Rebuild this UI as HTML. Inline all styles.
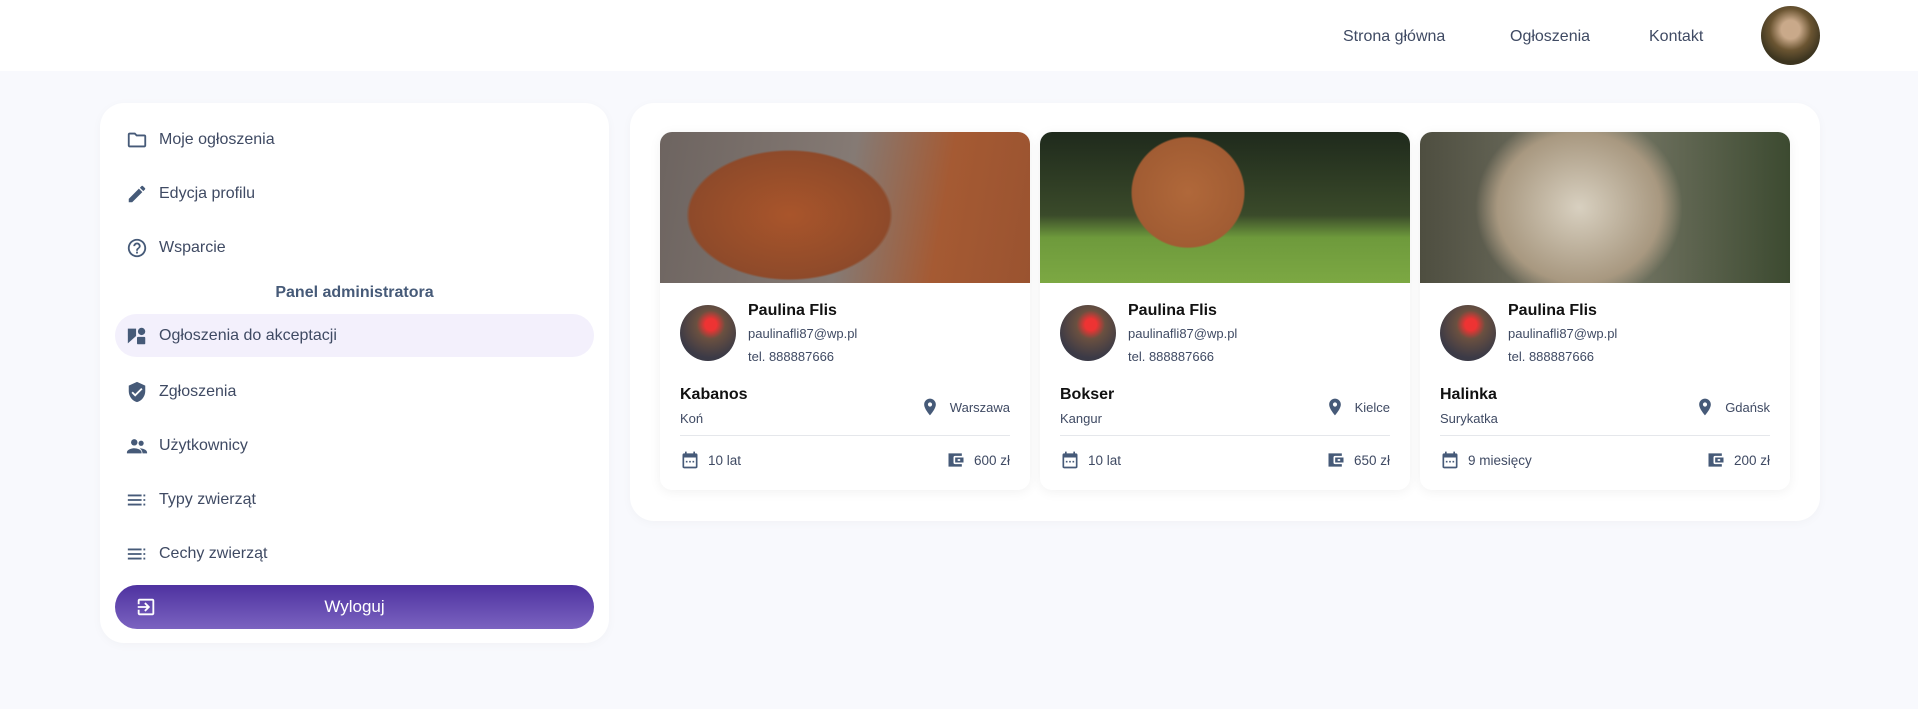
<!DOCTYPE html>
<html><head><meta charset="utf-8"><style>
*{box-sizing:border-box;margin:0;padding:0}
body{width:1918px;height:709px;background:#f8f9fd;font-family:"Liberation Sans",sans-serif;color:#3f4a63;position:relative;overflow:hidden}
.hdr{position:absolute;left:0;top:0;width:1918px;height:71px;background:#fff}
.nav{position:absolute;top:28px;font-size:16px;color:#3f4a63}
.av{position:absolute;left:1761px;top:6px;width:59px;height:59px;border-radius:50%;background:radial-gradient(circle at 50% 40%,#c9a98a 0 20%,#6b5532 45%,#3d3520 70%);overflow:hidden}
.side{position:absolute;left:100px;top:103px;width:509px;height:540px;background:#fff;border-radius:24px;box-shadow:0 2px 10px rgba(0,0,0,.03)}
.it{position:absolute;left:26px;font-size:16px;color:#3f4a63;display:flex;align-items:center;gap:11px;height:24px}
.it svg{width:22px;height:22px;fill:#465a78}
.hl{position:absolute;left:15px;top:211px;width:479px;height:43px;border-radius:22px;background:#f3f0fc}
.ttl{position:absolute;left:0;width:100%;text-align:center;top:181px;font-weight:bold;font-size:16px;color:#465a78}
.btn{position:absolute;left:15px;top:482px;width:479px;height:44px;border-radius:22px;background:linear-gradient(#4e32a0,#7b63c0);color:#fff;font-size:17px;text-align:center;line-height:44px}
.main{position:absolute;left:630px;top:103px;width:1190px;height:418px;background:#fff;border-radius:24px;box-shadow:0 2px 10px rgba(0,0,0,.03)}
.card{position:absolute;top:29px;width:370px;height:358px;background:#fff;border-radius:12px;box-shadow:0 2px 12px rgba(0,0,0,.06);overflow:hidden}
.img{height:151px}
.ua{position:absolute;left:20px;top:173px;width:56px;height:56px;border-radius:50%;background:radial-gradient(circle at 55% 35%,#e33 0 12%,#6a5040 30%,#3b3a46 70%)}
.nm{position:absolute;left:88px;top:170px;font-weight:bold;font-size:16px;color:#111}
.em{position:absolute;left:88px;top:194px;font-size:13px;color:#3f4a63}
.te{position:absolute;left:88px;top:217px;font-size:13px;color:#3f4a63}
.pn{position:absolute;left:20px;top:254px;font-weight:bold;font-size:16px;color:#111}
.sp{position:absolute;left:20px;top:279px;font-size:13px;color:#3f4a63}
.loc{position:absolute;right:20px;top:265px;font-size:13px;display:flex;gap:10px;align-items:center}
.dv{position:absolute;left:20px;right:20px;top:303px;border-top:1px solid #e5e7eb}
.bl{position:absolute;left:20px;top:318px;font-size:13.5px;display:flex;gap:8px;align-items:center}
.br{position:absolute;right:20px;top:318px;font-size:13.5px;display:flex;gap:8px;align-items:center}
svg.s{width:20px;height:20px;fill:#465a78}
</style></head><body>
<div class="hdr">
<div class="nav" style="left:1343px">Strona główna</div>
<div class="nav" style="left:1510px">Ogłoszenia</div>
<div class="nav" style="left:1649px">Kontakt</div>
<div class="av"></div>
</div>
<div class="side">
<div class="it" style="top:25px"><svg viewBox="0 0 24 24"><path d="M20 6h-8l-2-2H4c-1.1 0-2 .9-2 2v12c0 1.1.9 2 2 2h16c1.1 0 2-.9 2-2V8c0-1.1-.9-2-2-2zm0 12H4V6h5.2l2 2H20v10z"/></svg>Moje ogłoszenia</div>
<div class="it" style="top:79px"><svg viewBox="0 0 24 24"><path d="M3 17.25V21h3.75L17.810 9.94l-3.75-3.75L3 17.25zM20.71 7.04a1 1 0 000-1.41l-2.34-2.34a1 1 0 00-1.41 0l-1.83 1.830 3.75 3.75 1.83-1.83z"/></svg>Edycja profilu</div>
<div class="it" style="top:133px"><svg viewBox="0 0 24 24"><path d="M11 18h2v-2h-2v2zm1-16C6.48 2 2 6.48 2 12s4.48 10 10 10 10-4.48 10-10S17.52 2 12 2zm0 18c-4.41 0-8-3.59-8-8s3.59-8 8-8 8 3.59 8 8-3.59 8-8 8zm0-14c-2.21 0-4 1.79-4 4h2c0-1.1.9-2 2-2s2 .9 2 2c0 2-3 1.75-3 5h2c0-2.25 3-2.5 3-5 0-2.21-1.79-4-4-4z"/></svg>Wsparcie</div>
<div class="ttl">Panel administratora</div>
<div class="hl"></div>
<div class="it" style="top:221px"><svg viewBox="0 0 24 24"><path d="M2 4h9v8l-9 8z"/><circle cx="17" cy="7" r="4"/><rect x="12" y="13" width="9" height="8" rx="1"/></svg>Ogłoszenia do akceptacji</div>
<div class="it" style="top:277px"><svg viewBox="0 0 24 24"><path d="M12 1L3 5v6c0 5.55 3.84 10.74 9 12 5.16-1.26 9-6.45 9-12V5l-9-4zm-2 16l-4-4 1.41-1.41L10 14.17l6.59-6.59L18 9l-8 8z"/></svg>Zgłoszenia</div>
<div class="it" style="top:331px"><svg viewBox="0 0 24 24"><circle cx="9" cy="8" r="3.5"/><circle cx="16.5" cy="9" r="2.8"/><path d="M1 19c0-3 5-4.5 8-4.5s8 1.5 8 4.5v1H1zM15 14.6c3 0 8 1.4 8 4.4v1h-5c0-2-1-4-3-5.4z"/></svg>Użytkownicy</div>
<div class="it" style="top:385px"><svg viewBox="0 0 24 24"><path d="M2 6h15v2H2zM2 11h15v2H2zM2 16h15v2H2zM19 6h2v2h-2zM19 11h2v2h-2zM19 16h2v2h-2z"/></svg>Typy zwierząt</div>
<div class="it" style="top:439px"><svg viewBox="0 0 24 24"><path d="M2 6h15v2H2zM2 11h15v2H2zM2 16h15v2H2zM19 6h2v2h-2zM19 11h2v2h-2zM19 16h2v2h-2z"/></svg>Cechy zwierząt</div>
<div class="btn"><svg viewBox="0 0 24 24" style="position:absolute;left:20px;top:11px;width:22px;height:22px;fill:#fff"><path d="M10.09 15.59L11.5 17l5-5-5-5-1.41 1.41L12.67 11H3v2h9.67l-2.58 2.59zM19 3H5c-1.11 0-2 .9-2 2v4h2V5h14v14H5v-4H3v4c0 1.1.89 2 2 2h14c1.1 0 2-.9 2-2V5c0-1.1-.9-2-2-2z"/></svg>Wyloguj</div>
</div>
<div class="main">
<div class="card" style="left:30px"><div class="img" style="background:radial-gradient(ellipse 45% 70% at 35% 55%,#a9552b,#8e4a2a 60%,transparent 62%),linear-gradient(100deg,#6d6460,#857a74 50%,#a55a33 75%,#9a5330)"></div>
<div class="ua"></div><div class="nm">Paulina Flis</div><div class="em">paulinafli87@wp.pl</div><div class="te">tel. 888887666</div>
<div class="pn">Kabanos</div><div class="sp">Koń</div>
<div class="loc"><svg class="s" viewBox="0 0 24 24"><path d="M12 2C8.13 2 5 5.13 5 9c0 5.25 7 13 7 13s7-7.75 7-13c0-3.87-3.13-7-7-7zm0 9.5a2.5 2.5 0 110-5 2.5 2.5 0 010 5z"/></svg>Warszawa</div>
<div class="dv"></div>
<div class="bl"><svg class="s" viewBox="0 0 24 24"><path d="M19 4h-1V2h-2v2H8V2H6v2H5a2 2 0 00-2 2v14a2 2 0 002 2h14a2 2 0 002-2V6a2 2 0 00-2-2zm0 16H5V9h14v11zM7 13h2v2H7zm4 0h2v2h-2zm4 0h2v2h-2z"/></svg>10 lat</div>
<div class="br"><svg class="s" viewBox="0 0 24 24"><path d="M3 4h16v3h-8a2 2 0 00-2 2v6a2 2 0 002 2h8v3H3zM11 9h10v6H11zm3 2v2h3v-2z"/></svg>600 zł</div></div>
<div class="card" style="left:410px"><div class="img" style="background:radial-gradient(ellipse 25% 60% at 40% 40%,#b0683a,#a15c33 60%,transparent 62%),linear-gradient(#1f2a1c,#3a4a2a 55%,#6e9a3c 70%,#7ca843)"></div>
<div class="ua"></div><div class="nm">Paulina Flis</div><div class="em">paulinafli87@wp.pl</div><div class="te">tel. 888887666</div>
<div class="pn">Bokser</div><div class="sp">Kangur</div>
<div class="loc"><svg class="s" viewBox="0 0 24 24"><path d="M12 2C8.13 2 5 5.13 5 9c0 5.25 7 13 7 13s7-7.75 7-13c0-3.87-3.13-7-7-7zm0 9.5a2.5 2.5 0 110-5 2.5 2.5 0 010 5z"/></svg>Kielce</div>
<div class="dv"></div>
<div class="bl"><svg class="s" viewBox="0 0 24 24"><path d="M19 4h-1V2h-2v2H8V2H6v2H5a2 2 0 00-2 2v14a2 2 0 002 2h14a2 2 0 002-2V6a2 2 0 00-2-2zm0 16H5V9h14v11zM7 13h2v2H7zm4 0h2v2h-2zm4 0h2v2h-2z"/></svg>10 lat</div>
<div class="br"><svg class="s" viewBox="0 0 24 24"><path d="M3 4h16v3h-8a2 2 0 00-2 2v6a2 2 0 002 2h8v3H3zM11 9h10v6H11zm3 2v2h3v-2z"/></svg>650 zł</div></div>
<div class="card" style="left:790px"><div class="img" style="background:radial-gradient(ellipse 40% 90% at 43% 50%,#d8d0c0,#a89880 55%,transparent 70%),linear-gradient(90deg,#4e4e40,#7a7a6a 50%,#3c4a30)"></div>
<div class="ua"></div><div class="nm">Paulina Flis</div><div class="em">paulinafli87@wp.pl</div><div class="te">tel. 888887666</div>
<div class="pn">Halinka</div><div class="sp">Surykatka</div>
<div class="loc"><svg class="s" viewBox="0 0 24 24"><path d="M12 2C8.13 2 5 5.13 5 9c0 5.25 7 13 7 13s7-7.75 7-13c0-3.87-3.13-7-7-7zm0 9.5a2.5 2.5 0 110-5 2.5 2.5 0 010 5z"/></svg>Gdańsk</div>
<div class="dv"></div>
<div class="bl"><svg class="s" viewBox="0 0 24 24"><path d="M19 4h-1V2h-2v2H8V2H6v2H5a2 2 0 00-2 2v14a2 2 0 002 2h14a2 2 0 002-2V6a2 2 0 00-2-2zm0 16H5V9h14v11zM7 13h2v2H7zm4 0h2v2h-2zm4 0h2v2h-2z"/></svg>9 miesięcy</div>
<div class="br"><svg class="s" viewBox="0 0 24 24"><path d="M3 4h16v3h-8a2 2 0 00-2 2v6a2 2 0 002 2h8v3H3zM11 9h10v6H11zm3 2v2h3v-2z"/></svg>200 zł</div></div>
</div>
</body></html>
